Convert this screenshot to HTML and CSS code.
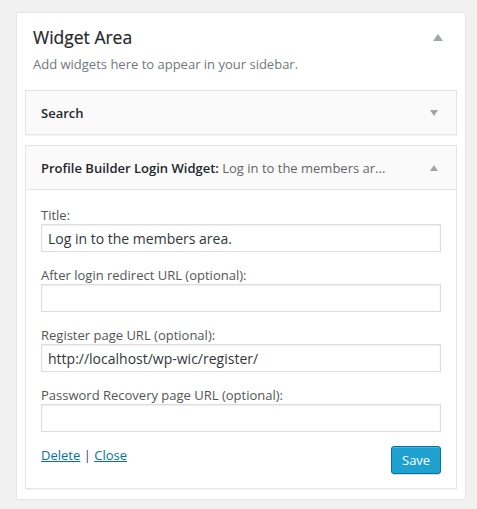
FILE: index.html
```html
<!DOCTYPE html>
<html>
<head>
<meta charset="utf-8">
<link rel="stylesheet" href="styles.css">
</head>
<body>
<div class="sidebar">
  <div class="sidebar-head">
    <h2 class="sidebar-title">Widget Area</h2>
    <svg class="tri tri-big" width="10" height="7" viewBox="0 0 10 7"><polygon points="5,0 10,7 0,7"/></svg>
  </div>
  <p class="sidebar-desc">Add widgets here to appear in your sidebar.</p>

  <div class="widget">
    <div class="widget-top">
      <h3 class="widget-title">Search</h3>
      <svg class="tri" width="8" height="6" viewBox="0 0 8 6"><polygon points="0,0 8,0 4,6"/></svg>
    </div>
  </div>

  <div class="widget">
    <div class="widget-top">
      <h3 class="widget-title">Profile Builder Login Widget:<span class="in-title"> Log in to the members ar...</span></h3>
      <svg class="tri" width="8" height="6" viewBox="0 0 8 6"><polygon points="4,0 8,6 0,6"/></svg>
    </div>
    <div class="widget-inside">
      <div class="field">
        <label class="lbl">Title:</label>
        <input class="inp" type="text" value="Log in to the members area.">
      </div>
      <div class="field">
        <label class="lbl">After login redirect URL (optional):</label>
        <input class="inp" type="text" value="">
      </div>
      <div class="field">
        <label class="lbl">Register page URL (optional):</label>
        <input class="inp" type="text" value="http://localhost/wp-wic/register/">
      </div>
      <div class="field">
        <label class="lbl">Password Recovery page URL (optional):</label>
        <input class="inp" type="text" value="">
      </div>
      <div class="controls">
        <div class="links"><a href="#" class="lnk">Delete</a> <span class="sep">|</span> <a href="#" class="lnk">Close</a></div>
        <button class="btn" type="button">Save</button>
      </div>
    </div>
  </div>
</div>
</body>
</html>
```

FILE: styles.css
```css
html, body {
  margin: 0;
  padding: 0;
  background: #f1f1f1;
  font-family: "Open Sans", "Liberation Sans", sans-serif;
  color: #444;
  font-size: 13px;
}
.sidebar {
  box-sizing: border-box;
  width: 450px;
  margin: 12px 0 0 16px;
  background: #fff;
  border: 1px solid #e5e5e5;
  box-shadow: 0 1px 1px rgba(0,0,0,.04);
  padding: 0 8px 10px;
}
.sidebar-head {
  display: flex;
  align-items: center;
  justify-content: space-between;
  padding: 12px 14px 0 8px;
  height: 25px;
}
.sidebar-title {
  margin: 0;
  font-size: 17.5px;
  font-weight: 400;
  color: #23282d;
  line-height: 25px;
  -webkit-text-stroke: 0.2px #23282d;
}
.tri { fill: #a0a5aa; display: block; }
.tri-big { margin-top: -1px; }
.sidebar-desc {
  margin: 5px 0 0;
  padding: 0 8px;
  line-height: 18px;
  color: #72777c;
}
.widget {
  margin-top: 17px;
  border: 1px solid #e5e5e5;
  background: #fafafa;
  box-shadow: 0 1px 1px rgba(0,0,0,.04);
}
.widget + .widget { margin-top: 10px; }
.widget-top {
  height: 43px;
  display: flex;
  align-items: center;
  justify-content: space-between;
  padding: 0 18px 0 15px;
}
.widget-title {
  margin: 0;
  font-size: 13px;
  font-weight: 600;
  color: #23282d;
  line-height: 16px;
  white-space: nowrap;
}
.in-title {
  font-weight: 400;
  color: #666;
}
.widget-inside {
  background: #fff;
  border-top: 1px solid #e5e5e5;
  padding: 16px 15px 14px;
}
.field {
  margin-bottom: 14px;
}
.lbl {
  display: block;
  line-height: 18px;
  color: #555;
}
.inp {
  display: block;
  box-sizing: border-box;
  width: 400px;
  height: 28px;
  margin: 0;
  padding: 0 6px;
  border: 1px solid #ddd;
  box-shadow: inset 0 1px 2px rgba(0,0,0,.07);
  background: #fff;
  font-family: "Open Sans", "Liberation Sans", sans-serif;
  font-size: 14px;
  color: #32373c;
  outline: none;
}
.field:last-of-type { margin-bottom: 8px; }
.controls {
  display: flex;
  justify-content: space-between;
  align-items: flex-start;
}
.links { line-height: 18px; }
.lnk { color: #0074a2; text-decoration: underline; }
.sep { color: #444; }
.btn {
  box-sizing: border-box;
  width: 50px;
  height: 28px;
  padding: 0 10px 2px;
  border: 1px solid #0074a2;
  border-radius: 3px;
  background: #1ea1d0;
  box-shadow: inset 0 1px 0 rgba(120,200,230,.5), 0 1px 0 rgba(0,0,0,.15);
  color: #fff;
  font-family: "Open Sans", "Liberation Sans", sans-serif;
  font-size: 13px;
  line-height: 26px;
}
```
